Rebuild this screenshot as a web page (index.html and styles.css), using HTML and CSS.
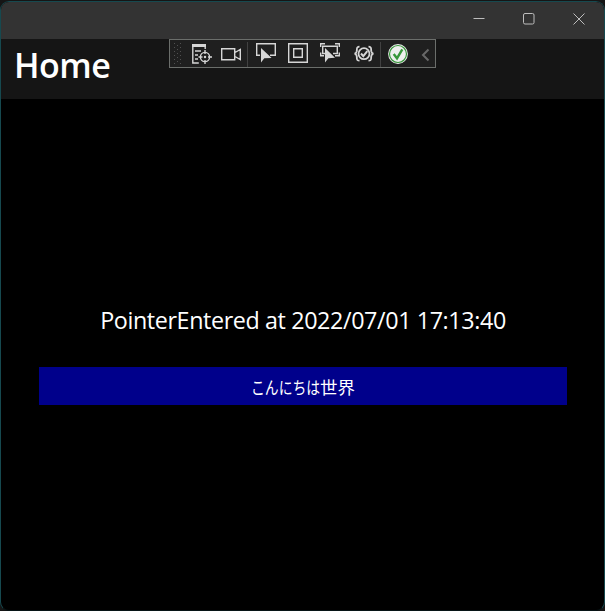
FILE: index.html
```html
<!DOCTYPE html>
<html lang="ja">
<head>
<meta charset="utf-8">
<title>Home</title>
<link rel="stylesheet" href="styles.css">
</head>
<body>
<div class="window">
  <header class="titlebar">
    <svg class="caption" viewBox="0 0 50 37"><path d="M18.5 16.5h11"/></svg>
    <svg class="caption" viewBox="0 0 50 37"><rect x="18.5" y="11.5" width="10.5" height="10.5" rx="1.5"/></svg>
    <svg class="caption" viewBox="0 0 50 37"><path d="M18.5 11.5l11 11M29.5 11.5l-11 11"/></svg>
  </header>
  <div class="navbar"><h1>Home</h1></div>
  <main class="content">
    <p class="status">PointerEntered at 2022/07/01 17:13:40</p>
    <button class="hello"><span class="kana">こんにちは</span><span class="kanji">世界</span></button>
  </main>
  <div class="toolbar">
    <svg class="grip" viewBox="0 0 8 22"><path d="M1.500 0v22M7.500 0v22"/><path d="M4.500 2v20"/></svg>
    <svg class="icon tree" viewBox="0 0 20 21"><path class="fill" d="M0 1h14v3H0z"/><path d="M.8 3v17h6M13.2 3v3M3 8h6M3 12h3M3 16h3"/><circle cx="13" cy="14" r="4.6"/><circle class="fill" cx="13" cy="14" r="1.2"/><path d="M13 7v4M13 17v4M6.500 14h4M16 14h4"/></svg>
    <svg class="icon camera" viewBox="0 0 20 21"><path d="M.7 5.700h13v11H.7zM14 9.500l5.300-3v10l-5.300-3"/></svg>
    <div class="divider"></div>
    <svg class="icon select" viewBox="0 0 20 21"><path d="M4 12.300H.7V.7h18.600v11.600H14"/><path class="fill" d="M5 5v14.500l3.300-4.200 7.300-.3z"/></svg>
    <svg class="icon adorner" viewBox="0 0 20 21"><path d="M.7.700h18.600v18.600H.7zM5.700 5.700h8.600v8.600H5.700z"/></svg>
    <svg class="icon track" viewBox="0 0 20 21"><path d="M.7 4V.7H5M15 .7h4.300V4M.7 9.500v3.300H4M19.300 9.500v3.300H15M5 10.500H2.700V3.200h14.600v7.300H13"/><path class="fill" d="M5 5v14.500l3.400-4.200 6.600-.5z"/></svg>
    <svg class="icon binding" viewBox="0 0 20 21"><path d="M5.500 3.700C2 3.700 3.200 5.500 2.700 8.500Q2.200 10.500.5 10.700 2.200 11 2.700 13c.5 3-.7 4.700 2.800 4.700M14.500 3.700c3.500 0 2.300 1.800 2.800 4.800q.5 2 2.200 2.200-1.700.3-2.200 2.300c-.5 3 .7 4.700-2.800 4.700"/><circle cx="10" cy="10.700" r="5.500"/><path class="bold" d="M7 10.500l2.300 2.700 4-5"/></svg>
    <div class="divider"></div>
    <svg class="icon valid" viewBox="0 0 20 21"><circle class="disc" cx="10" cy="11" r="9.900"/><circle class="ring" cx="10" cy="11" r="8.500"/><path class="tick" d="M5.700 11l3.300 4.300 5.300-9"/></svg>
    <svg class="icon collapse" viewBox="0 0 10 21"><path d="M8.500 6.500L3 12l5.500 5.500"/></svg>
  </div>
</div>
</body>
</html>
```

FILE: styles.css
```css
* { box-sizing: border-box; }
html { background: #151515; }
body { margin: 0; height: 611px; padding-top: 1px; overflow: hidden; }
.window {
  position: relative;
  display: flex;
  flex-direction: column;
  height: 610px;
  border: 1px solid #16494f;
  border-bottom-color: #071416;
  border-radius: 9px;
  overflow: hidden;
  background: #000;
  color: #fff;
  font-family: "Open Sans", "Noto Sans", "Noto Sans CJK JP", sans-serif;
}
.titlebar {
  display: flex;
  justify-content: flex-end;
  height: 37px;
  background: #333;
}
.caption { width: 50px; height: 37px; fill: none; stroke: #bdbdbd; stroke-width: 1; transform: translateX(1px); }
.navbar { height: 60px; padding-left: 13px; background: #151515; }
h1 {
  margin: 0;
  font-size: 34px;
  line-height: 52px;
  font-weight: 600;
  letter-spacing: -.5px;
}
.content {
  flex: 1;
  display: flex;
  flex-direction: column;
  padding: 205px 37px 0 38px;
}
.status {
  margin: 0 0 31px;
  font-size: 23.300px;
  line-height: 32px;
  letter-spacing: -.38px;
  text-align: center;
  white-space: nowrap;
}
.hello {
  display: flex;
  justify-content: center;
  align-items: center;
  height: 38px;
  padding: 1px 0 0;
  border: 0;
  background: #00008b;
  color: #fff;
  font: 17.500px "Noto Sans CJK JP", sans-serif;
}
.kana { width: 69px; transform: scaleX(.79); transform-origin: left; white-space: nowrap; text-align: left; }
.toolbar {
  position: absolute;
  left: 168px;
  top: 37px;
  display: flex;
  width: 267px;
  height: 29px;
  padding: 3px 0 0 3px;
  border: 1px solid #6b6e6b;
  background: #1f1f1f;
}
.grip { flex: none; width: 8px; height: 22px; fill: none; stroke: #505050; stroke-dasharray: 1 3; }
.icon { flex: none; width: 20px; height: 21px; fill: none; stroke: #d6d6d6; stroke-width: 1.400; }
.fill { fill: #d6d6d6; stroke: none; }
.bold { stroke-width: 2; }
.tree { margin-left: 11px; }
.camera { margin-left: 9px; }
.divider { flex: none; width: 1px; height: 25px; margin: -1px 0 0 6px; background: #414141; }
.select { margin-left: 8px; }
.adorner, .track { margin-left: 12px; }
.binding { margin-left: 14px; stroke-width: 1.800; }
.valid { margin-left: 7px; }
.collapse { width: 10px; margin-left: 12px; stroke: #686868; stroke-width: 2; }
.disc { fill: #eee; stroke: none; }
.ring { stroke: #37963b; stroke-width: 1.200; }
.tick { stroke: #37963b; stroke-width: 2.400; }
```
